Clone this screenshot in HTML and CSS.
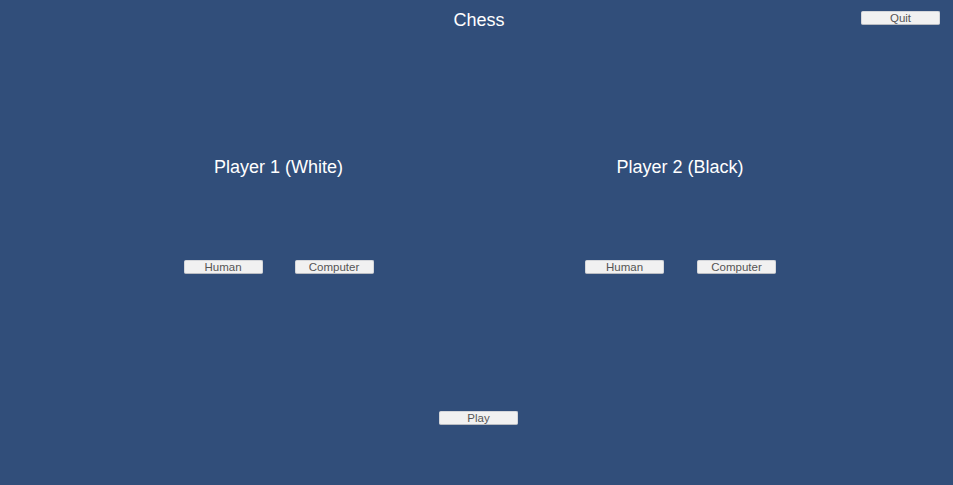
FILE: index.html
```html
<!DOCTYPE html>
<html>
<head>
<meta charset="utf-8">
<link rel="stylesheet" href="styles.css">
</head>
<body>
<div class="screen">
  <header class="top">
    <span></span>
    <h1 class="title">Chess</h1>
    <button class="btn quit">Quit</button>
  </header>
  <section class="players">
    <div class="player">
      <h2 class="label">Player 1 (White)</h2>
      <div class="choices">
        <button class="btn">Human</button>
        <button class="btn">Computer</button>
      </div>
    </div>
    <div class="player">
      <h2 class="label">Player 2 (Black)</h2>
      <div class="choices">
        <button class="btn">Human</button>
        <button class="btn">Computer</button>
      </div>
    </div>
  </section>
  <div class="play-row">
    <button class="btn">Play</button>
  </div>
</div>
</body>
</html>
```

FILE: styles.css
```css
html, body {
  margin: 0;
  padding: 0;
  height: 100%;
}
body {
  background: #314e7a;
  font-family: "Liberation Sans", Arial, sans-serif;
  color: #ffffff;
  overflow: hidden;
}
.screen {
  display: flex;
  flex-direction: column;
  height: 485px;
}
.top {
  display: grid;
  grid-template-columns: 1fr auto 1fr;
  align-items: start;
  padding: 0 13px 0 18px;
}
.title {
  margin: 10px 0 0;
  font-size: 18px;
  font-weight: normal;
  line-height: 20px;
}
.players {
  display: grid;
  grid-template-columns: 401px 402px;
  justify-content: center;
  padding-left: 6px;
  margin-top: 127px;
}
.player {
  display: flex;
  flex-direction: column;
  align-items: center;
}
.label {
  margin: 0;
  font-size: 18px;
  font-weight: normal;
  line-height: 20px;
}
.choices {
  display: flex;
  gap: 32px;
  margin-top: 83px;
}
.player + .player .choices {
  gap: 33px;
  padding-left: 1px;
}
.play-row {
  display: flex;
  justify-content: center;
  padding-left: 4px;
  margin-top: 137px;
}
.btn {
  box-sizing: border-box;
  width: 79px;
  height: 14px;
  padding: 0;
  margin: 0;
  background: #f1f1f1;
  border: 1px solid #d4d6da;
  border-bottom-color: #b9bcc2;
  border-radius: 2px;
  font-family: "Liberation Sans", Arial, sans-serif;
  font-size: 11.5px;
  line-height: 12px;
  color: #555555;
  text-align: center;
}
.btn.quit {
  justify-self: end;
  margin-top: 11px;
}
```
